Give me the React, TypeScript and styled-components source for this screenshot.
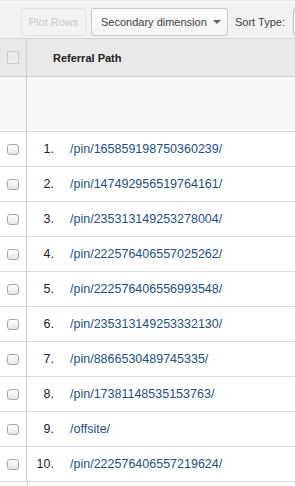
import styled, { createGlobalStyle } from 'styled-components'

const Global = createGlobalStyle`
	html, body {
		margin: 0;
		padding: 0;
		background: #fff;
		font-family: "Liberation Sans", Arial, sans-serif;
	}
`

const paths = [
	'/pin/165859198750360239/',
	'/pin/147492956519764161/',
	'/pin/235313149253278004/',
	'/pin/222576406557025262/',
	'/pin/222576406556993548/',
	'/pin/235313149253332130/',
	'/pin/8866530489745335/',
	'/pin/17381148535153763/',
	'/offsite/',
	'/pin/222576406557219624/',
]

const Page = styled.div`
	width: 295px;
	height: 486px;
	overflow: hidden;
	background: #fff;
`

const Toolbar = styled.div`
	height: 39px;
	box-sizing: border-box;
	border-top: 2px solid #ececec;
	box-shadow: inset 0 1px 0 #fbfbfb;
	border-bottom: 1px solid #d6d6d6;
	background: #f2f2f2;
	display: flex;
	align-items: center;
	padding: 4px 0 0 21px;
	gap: 5px;
	white-space: nowrap;
`

const Button = styled.div<{ $disabled?: boolean; $w: number }>`
	width: ${p => p.$w}px;
	height: 28px;
	box-sizing: border-box;
	display: flex;
	align-items: center;
	justify-content: ${p => (p.$disabled ? 'center' : 'space-between')};
	padding: 0 ${p => (p.$disabled ? 0 : 9)}px;
	border-radius: 3px;
	font-size: 11px;
	color: ${p => (p.$disabled ? '#c9c9c9' : '#444')};
	border: 1px solid ${p => (p.$disabled ? '#e2e2e2' : '#c9c9c9')};
	background: ${p => (p.$disabled ? '#f3f3f3' : 'linear-gradient(#fdfdfd, #f3f3f3)')};
	flex-shrink: 0;
`

const Arrow = styled.span`
	width: 0;
	height: 0;
	border-left: 4px solid transparent;
	border-right: 4px solid transparent;
	border-top: 4px solid #666;
	margin-right: -3px;
`

const Label = styled.span`
	font-size: 11px;
	color: #444;
	margin-left: 2px;
`

const Stub = styled.div`
	width: 20px;
	height: 28px;
	margin-left: 3px;
	box-sizing: border-box;
	border: 1px solid #bdbdbd;
	border-radius: 3px;
	background: #fdfdfd;
	flex-shrink: 0;
`

const Row = styled.div<{ $h: number; $bg?: string; $line?: string }>`
	display: grid;
	grid-template-columns: 27px 27px 1fr;
	height: ${p => p.$h}px;
	box-sizing: border-box;
	border-bottom: 1px solid ${p => p.$line || '#dcdcdc'};
	background: ${p => p.$bg || '#fff'};
	align-items: center;
`

const Lead = styled.div`
	height: 100%;
	border-right: 1px solid #cfcfcf;
	display: flex;
	align-items: center;
	padding-left: 7px;
`

const Box = styled.div<{ $head?: boolean }>`
	width: 12px;
	height: ${p => (p.$head ? 13 : 11)}px;
	box-sizing: border-box;
	border: 1px solid ${p => (p.$head ? '#cdcdcd' : '#a9a9a9')};
	border-radius: ${p => (p.$head ? 0 : 3)}px;
	background: ${p => (p.$head ? '#ececec' : 'linear-gradient(#fff, #e6e6e6)')};
`

const Num = styled.div`
	text-align: right;
	font-size: 12.5px;
	color: #222;
`

const Path = styled.a`
	padding-left: 16px;
	font-size: 12.5px;
	color: #1e4f87;
	text-decoration: none;
	white-space: nowrap;
`

const HeadTitle = styled.div`
	grid-column: 2 / 4;
	padding-left: 26px;
	font-size: 11px;
	font-weight: bold;
	color: #222;
`

const Tail = styled.div`
	height: 10px;
	width: 27px;
	border-right: 1px solid #cfcfcf;
`

export default function App() {
	return (
		<Page>
			<Global />
			<Toolbar>
				<Button $disabled $w={65}>Plot Rows</Button>
				<Button $w={137}>
					Secondary dimension
					<Arrow />
				</Button>
				<Label>Sort Type:</Label>
				<Stub />
			</Toolbar>
			<Row $h={38} $bg='#e9e9e9' $line='#d0d0d0'>
				<Lead><Box $head /></Lead>
				<HeadTitle>Referral Path</HeadTitle>
			</Row>
			<Row $h={55} $bg='#f8f8f8'>
				<Lead />
			</Row>
			{paths.map((p, i) => (
				<Row key={p} $h={35}>
					<Lead><Box /></Lead>
					<Num>{i + 1}.</Num>
					<Path href='#'>{p}</Path>
				</Row>
			))}
			<Tail />
		</Page>
	)
}
